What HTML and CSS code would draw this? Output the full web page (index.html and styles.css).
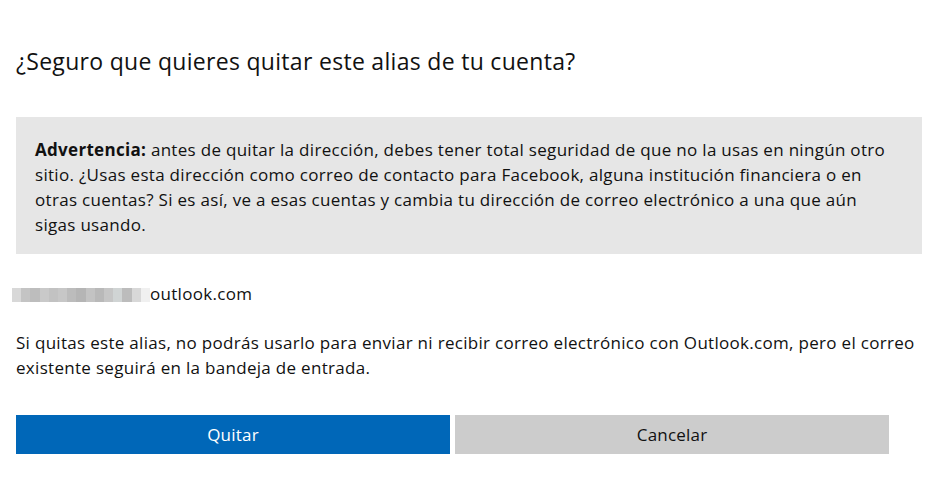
FILE: index.html
```html
<!DOCTYPE html>
<html lang="es">
<head>
<meta charset="utf-8">
<link rel="stylesheet" href="styles.css">
</head>
<body>
<main class="page">
  <h1 class="title">¿Seguro que quieres quitar este alias de tu cuenta?</h1>
  <div class="warning">
    <p><strong>Advertencia:</strong> antes de quitar la dirección, debes tener total seguridad de que no la usas en ningún otro sitio. ¿Usas esta dirección como correo de contacto para Facebook, alguna institución financiera o en otras cuentas? Si es así, ve a esas cuentas y cambia tu dirección de correo electrónico a una que aún sigas usando.</p>
  </div>
  <div class="alias">
    <span class="blur" aria-hidden="true">
      <i class="b1"></i><i class="b2"></i><i class="b3"></i><i class="b4"></i><i class="b5"></i><i class="b6"></i><i class="b7"></i><i class="b8"></i><i class="b9"></i><i class="b10"></i><i class="b11"></i><i class="b12"></i><i class="b13"></i><i class="b14"></i><i class="b15"></i>
    </span><span class="domain">outlook.com</span>
  </div>
  <p class="info">Si quitas este alias, no podrás usarlo para enviar ni recibir correo electrónico con Outlook.com, pero el correo existente seguirá en la bandeja de entrada.</p>
  <div class="actions">
    <button class="btn btn-primary">Quitar</button>
    <button class="btn btn-secondary">Cancelar</button>
  </div>
</main>
</body>
</html>
```
FILE: styles.css
```css
html, body {
  margin: 0;
  padding: 0;
  background: #ffffff;
}
body {
  font-family: "Open Sans", "Noto Sans", "Liberation Sans", sans-serif;
  color: #000;
}
.page {
  padding: 43px 15px 0 16px;
  width: 906px;
}
.title {
  margin: 0;
  font-weight: 400;
  font-size: 23px;
  letter-spacing: 0.3px;
  line-height: 36px;
  color: #111;
}
.warning {
  margin-top: 38px;
  background: #e6e6e6;
  padding: 20px 30px 17px 19px;
}
.warning p {
  margin: 0;
  font-size: 17px;
  letter-spacing: 0.3px;
  line-height: 25px;
  color: #111;
}
.warning strong {
  font-weight: 700;
}
.alias {
  display: flex;
  align-items: center;
  margin-top: 28px;
  margin-left: -4px;
  font-size: 17px;
  letter-spacing: 0.3px;
  line-height: 24px;
  color: #111;
}
.blur {
  display: flex;
  width: 138px;
  height: 14px;
  margin-top: 2px;
}
.blur i {
  display: block;
  flex: 1;
  height: 100%;
}
.b1 { background: #d8d8d8; }
.b2 { background: #c4c4c4; }
.b3 { background: #bdbdbd; }
.b4 { background: #c9c9c9; }
.b5 { background: #c2c2c2; }
.b6 { background: #c7c7c7; }
.b7 { background: #bcbcbc; }
.b8 { background: #b5b5b5; }
.b9 { background: #c3c3c3; }
.b10 { background: #b9b9b9; }
.b11 { background: #c6c6c6; }
.b12 { background: #d0d4d4; }
.b13 { background: #bcbcbc; }
.b14 { background: #d8d8d8; }
.b15 { background: #f0f0f0; }
.info {
  margin: 24px 0 0 0;
  font-size: 17px;
  letter-spacing: 0.3px;
  line-height: 25px;
  color: #111;
}
.actions {
  display: flex;
  gap: 5px;
  margin-top: 35px;
  width: 873px;
}
.btn {
  flex: 1;
  height: 39px;
  border: none;
  font-family: inherit;
  font-size: 17px;
  letter-spacing: 0.2px;
  padding: 0;
  cursor: pointer;
}
.btn-primary {
  background: #0067b8;
  color: #fff;
}
.btn-secondary {
  background: #cccccc;
  color: #111;
}
```
